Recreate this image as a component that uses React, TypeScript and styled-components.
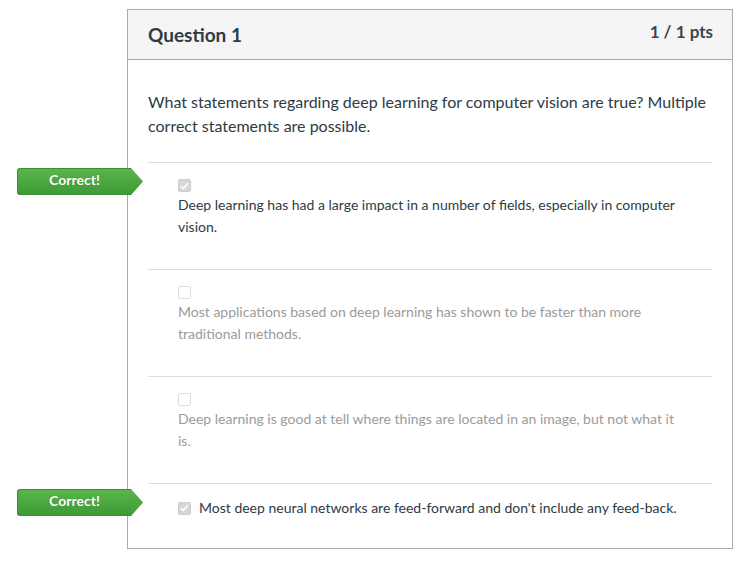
import React from "react";
import styled, { createGlobalStyle } from "styled-components";

const Global = createGlobalStyle`
  html, body { margin: 0; padding: 0; background: #ffffff; }
  body { font-family: Lato, "Noto Sans", "Liberation Sans", sans-serif; color: #2d3b45; }
`;

const Page = styled.div`
  padding: 9px 0 0 127px;
  width: 606px;
`;

const Card = styled.div`
  border: 1px solid #aaaaaa;
  background: #ffffff;
  height: 540px;
  box-sizing: border-box;
  width: 606px;
`;

const Header = styled.div`
  display: flex;
  justify-content: space-between;
  align-items: flex-start;
  background: #f5f5f5;
  border-bottom: 1px solid #aaaaaa;
  height: 49px;
  padding: 0 19px 0 20px;
`;

const Title = styled.h2`
  margin: 13px 0 0;
  font-size: 19px;
  line-height: 24px;
  font-weight: 700;
  color: #2d3b45;
`;

const Points = styled.div`
  margin-top: 12px;
  font-size: 17px;
  line-height: 20px;
  font-weight: 700;
  color: #3d454c;
`;

const Body = styled.div`
  padding: 30px 20px 0;
`;

const QuestionText = styled.p`
  margin: 0 0 24px;
  font-size: 16px;
  line-height: 24px;
  color: #2d3b45;
`;

const Answer = styled.div<{ $inline?: boolean }>`
  position: relative;
  border-top: 1px solid #dddddd;
  padding: ${(p) => (p.$inline ? "13px 0 0 30px" : "16px 0 31px 30px")};
  display: flex;
  flex-direction: ${(p) => (p.$inline ? "row" : "column")};
  align-items: ${(p) => (p.$inline ? "center" : "flex-start")};
  gap: ${(p) => (p.$inline ? "8px" : "2px")};
`;

const Box = styled.span<{ $checked?: boolean }>`
  width: 13px;
  height: 13px;
  flex: none;
  box-sizing: border-box;
  border-radius: 2px;
  border: 1px solid ${(p) => (p.$checked ? "#cfcfcf" : "#dedede")};
  background: ${(p) => (p.$checked ? "#d6d6d6" : "#ffffff")};
  display: flex;
  align-items: center;
  justify-content: center;
`;

const AnswerText = styled.div<{ $muted?: boolean }>`
  max-width: 502px;
  font-size: 14px;
  line-height: 22px;
  color: ${(p) => (p.$muted ? "#9b9b9b" : "#2d3b45")};
`;

const Badge = styled.div`
  position: absolute;
  left: -131px;
  top: 5px;
  width: 114px;
  height: 27px;
  box-sizing: border-box;
  border-radius: 3px 0 0 3px;
  background: linear-gradient(#5bb54d, #3d9a36);
  border: 1px solid #3a8f33;
  border-right: none;
  color: #ffffff;
  font-size: 14px;
  font-weight: 700;
  line-height: 22px;
  text-align: center;
  text-shadow: 0 0 1px rgba(0, 0, 0, 0.3);
  &::after {
    content: "";
    position: absolute;
    top: -1px;
    right: -12px;
    width: 12px;
    height: 27px;
    background: linear-gradient(#5bb54d, #3d9a36);
    clip-path: polygon(0 0, 100% 50%, 0 100%);
  }
`;

const Check = () => (
  <svg width="9" height="8" viewBox="0 0 9 8">
    <path d="M1 4.2 L3.4 6.5 L8 1.3" fill="none" stroke="#ffffff" strokeWidth="1.7" />
  </svg>
);

type Item = { text: string; checked: boolean; correct: boolean; muted: boolean; inline?: boolean };

const items: Item[] = [
  {
    text: "Deep learning has had a large impact in a number of fields, especially in computer vision.",
    checked: true,
    correct: true,
    muted: false,
  },
  {
    text: "Most applications based on deep learning has shown to be faster than more traditional methods.",
    checked: false,
    correct: false,
    muted: true,
  },
  {
    text: "Deep learning is good at tell where things are located in an image, but not what it is.",
    checked: false,
    correct: false,
    muted: true,
  },
  {
    text: "Most deep neural networks are feed-forward and don't include any feed-back.",
    checked: true,
    correct: true,
    muted: false,
    inline: true,
  },
];

export default function App() {
  return (
    <>
      <Global />
      <Page>
        <Card>
          <Header>
            <Title>Question 1</Title>
            <Points>1 / 1 pts</Points>
          </Header>
          <Body>
            <QuestionText>
              What statements regarding deep learning for computer vision are true? Multiple correct statements are
              possible.
            </QuestionText>
            {items.map((it, i) => (
              <Answer key={i} $inline={it.inline}>
                {it.correct && <Badge>Correct!</Badge>}
                <Box $checked={it.checked}>{it.checked && <Check />}</Box>
                <AnswerText $muted={it.muted}>{it.text}</AnswerText>
              </Answer>
            ))}
          </Body>
        </Card>
      </Page>
    </>
  );
}
